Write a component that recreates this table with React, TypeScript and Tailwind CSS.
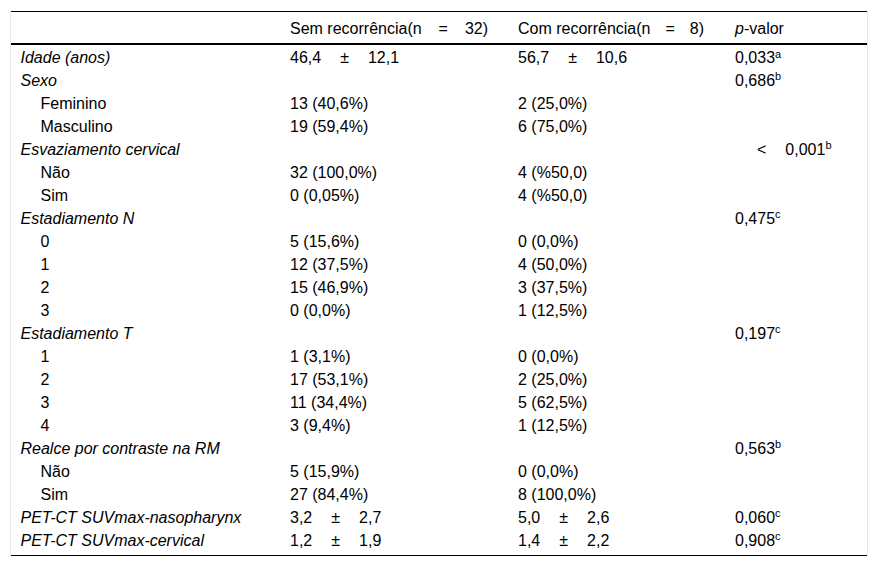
import React from "react";

type Row = {
  label: string;
  italic?: boolean;
  indent?: boolean;
  sem?: React.ReactNode;
  com?: React.ReactNode;
  p?: React.ReactNode;
};

const pm = (a: string, b: string) => (
  <>
    {a}
    <span className="mx-[19px]">±</span>
    {b}
  </>
);

const pv = (v: string, s: string) => (
  <>
    {v}
    <sup className="text-[11px]">{s}</sup>
  </>
);

const rows: Row[] = [
  { label: "Idade (anos)", italic: true, sem: pm("46,4", "12,1"), com: pm("56,7", "10,6"), p: pv("0,033", "a") },
  { label: "Sexo", italic: true, p: pv("0,686", "b") },
  { label: "Feminino", indent: true, sem: "13 (40,6%)", com: "2 (25,0%)" },
  { label: "Masculino", indent: true, sem: "19 (59,4%)", com: "6 (75,0%)" },
  {
    label: "Esvaziamento cervical",
    italic: true,
    p: (
      <>
        <span className="ml-[22px] mr-[19px]">&lt;</span>
        {pv("0,001", "b")}
      </>
    ),
  },
  { label: "Não", indent: true, sem: "32 (100,0%)", com: "4 (%50,0)" },
  { label: "Sim", indent: true, sem: "0 (0,05%)", com: "4 (%50,0)" },
  { label: "Estadiamento N", italic: true, p: pv("0,475", "c") },
  { label: "0", indent: true, sem: "5 (15,6%)", com: "0 (0,0%)" },
  { label: "1", indent: true, sem: "12 (37,5%)", com: "4 (50,0%)" },
  { label: "2", indent: true, sem: "15 (46,9%)", com: "3 (37,5%)" },
  { label: "3", indent: true, sem: "0 (0,0%)", com: "1 (12,5%)" },
  { label: "Estadiamento T", italic: true, p: pv("0,197", "c") },
  { label: "1", indent: true, sem: "1 (3,1%)", com: "0 (0,0%)" },
  { label: "2", indent: true, sem: "17 (53,1%)", com: "2 (25,0%)" },
  { label: "3", indent: true, sem: "11 (34,4%)", com: "5 (62,5%)" },
  { label: "4", indent: true, sem: "3 (9,4%)", com: "1 (12,5%)" },
  { label: "Realce por contraste na RM", italic: true, p: pv("0,563", "b") },
  { label: "Não", indent: true, sem: "5 (15,9%)", com: "0 (0,0%)" },
  { label: "Sim", indent: true, sem: "27 (84,4%)", com: "8 (100,0%)" },
  { label: "PET-CT SUVmax-nasopharynx", italic: true, sem: pm("3,2", "2,7"), com: pm("5,0", "2,6"), p: pv("0,060", "c") },
  { label: "PET-CT SUVmax-cervical", italic: true, sem: pm("1,2", "1,9"), com: pm("1,4", "2,2"), p: pv("0,908", "c") },
];

export default function App() {
  return (
    <div className="min-h-screen bg-white pt-[11px] pl-[10px] font-['Liberation_Sans',Arial,sans-serif] text-[16px] leading-[18px] text-black">
      <div className="w-[858px] border-x border-[#e8e8e8]">
        <div className="border-t border-b border-black pb-[5px]">
          <table className="w-full table-fixed border-collapse">
            <colgroup>
              <col className="w-[269.5px]" />
              <col className="w-[228px]" />
              <col className="w-[217px]" />
              <col />
            </colgroup>
            <thead>
              <tr className="h-[32px] border-b-2 border-black">
                <th className="px-[9.5px] pt-[3px] pb-0 text-left font-normal"></th>
                <th className="px-[9.5px] pt-[3px] pb-0 text-left font-normal whitespace-nowrap">
                  Sem recorrência(n<span className="mx-[17px]">=</span>32)
                </th>
                <th className="px-[9.5px] pt-[3px] pb-0 text-left font-normal whitespace-nowrap">
                  Com recorrência(n<span className="mx-[15px]">=</span>8)
                </th>
                <th className="px-[9.5px] pt-[3px] pb-0 text-left font-normal">
                  <i>p</i>-valor
                </th>
              </tr>
            </thead>
            <tbody>
              {rows.map((r, i) => (
                <tr key={i} className="h-[23px]">
                  <td className={`pt-[4px] pb-0 pr-[9.5px] whitespace-nowrap ${r.indent ? "pl-[29.5px]" : "pl-[9.5px]"} ${r.italic ? "italic" : ""}`}>
                    {r.label}
                  </td>
                  <td className="px-[9.5px] pt-[4px] pb-0 whitespace-nowrap">{r.sem}</td>
                  <td className="px-[9.5px] pt-[4px] pb-0 whitespace-nowrap">{r.com}</td>
                  <td className="px-[9.5px] pt-[4px] pb-0 whitespace-nowrap">{r.p}</td>
                </tr>
              ))}
            </tbody>
          </table>
        </div>
      </div>
    </div>
  );
}
